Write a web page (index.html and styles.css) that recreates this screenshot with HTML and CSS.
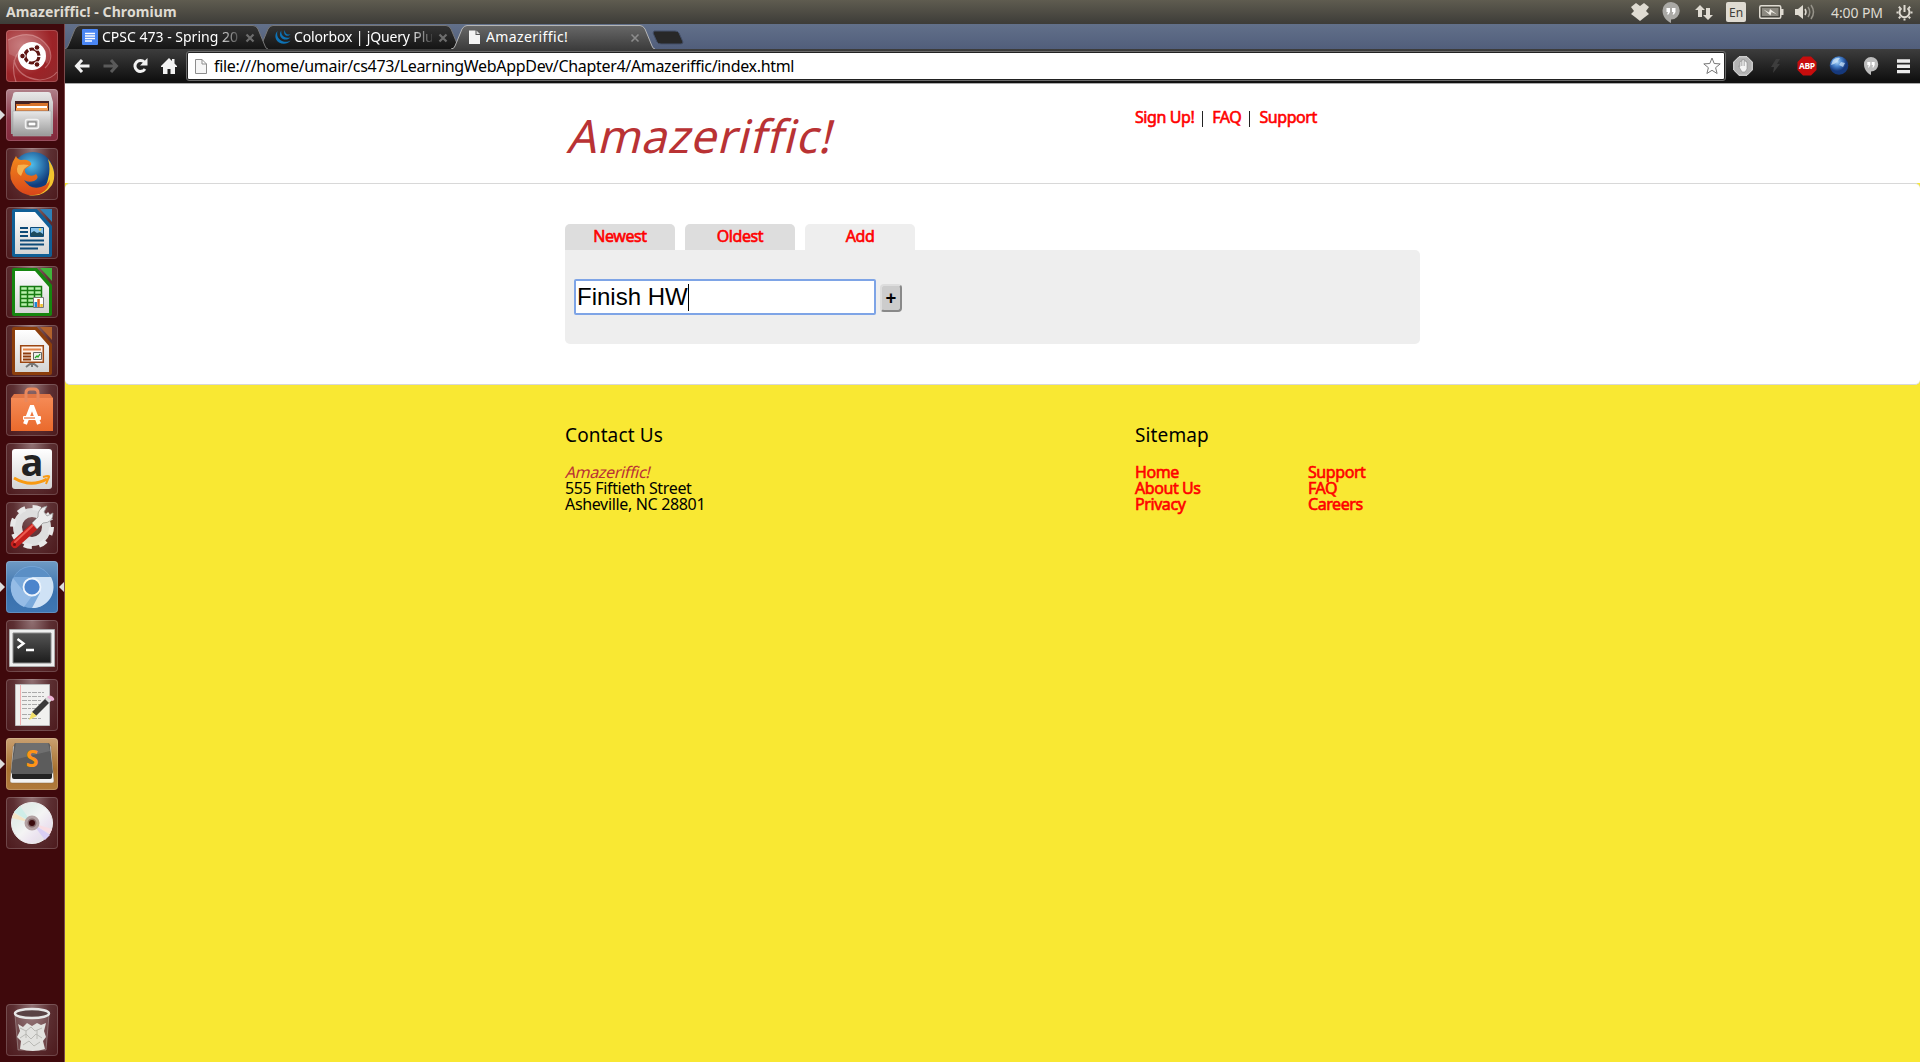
FILE: index.html
```html
<!DOCTYPE html>
<html lang="en">
<head>
<meta charset="utf-8">
<title>Amazeriffic!</title>
<link rel="stylesheet" href="styles.css">
</head>
<body>
<svg width="0" height="0" class="defs">
  <defs>
    <linearGradient id="metal" x2="0" y2="1"><stop stop-color="#e8e8e8"/><stop offset="1" stop-color="#999"/></linearGradient>
    <linearGradient id="paper" x2="0" y2="1"><stop stop-color="#fff"/><stop offset="1" stop-color="#d4d4d4"/></linearGradient>
    <linearGradient id="tabdark" x2="0" y2="1"><stop stop-color="#343434"/><stop offset="1" stop-color="#151515"/></linearGradient>
    <linearGradient id="tablight" x2="0" y2="1"><stop stop-color="#686868"/><stop offset="1" stop-color="#3d3d3d"/></linearGradient>
    <linearGradient id="bag" x2="0" y2="1"><stop stop-color="#f58a55"/><stop offset="1" stop-color="#ea6a2c"/></linearGradient>
    <linearGradient id="screen" x2="0" y2="1"><stop stop-color="#555"/><stop offset="1" stop-color="#1c1c1c"/></linearGradient>
    <radialGradient id="globe" cx=".45" cy=".3"><stop stop-color="#4fc0ee"/><stop offset="1" stop-color="#123c7c"/></radialGradient>
    <radialGradient id="earth" cx=".4" cy=".3"><stop stop-color="#b5dcfa"/><stop offset=".5" stop-color="#4a86d0"/><stop offset="1" stop-color="#16397c"/></radialGradient>
    <linearGradient id="fox" x2="0" y2="1"><stop stop-color="#f28a1c"/><stop offset="1" stop-color="#d9461a"/></linearGradient>
    <linearGradient id="disc" x2="1" y2="1"><stop stop-color="#e8e8e8"/><stop offset=".3" stop-color="#e4eeea"/><stop offset=".5" stop-color="#f4f4f4"/><stop offset=".7" stop-color="#ece4f0"/><stop offset="1" stop-color="#ddd"/></linearGradient>
  </defs>
</svg>

<header class="panel">
  <span class="panel-title">Amazeriffic! - Chromium</span>
  <div class="indicators">
    <svg class="ind-dropbox" width="20" height="18" viewBox="0 0 20 18"><path fill="#dfdbd2" d="M6 0l4 3 4-3 5 4-3 4 3 3-4 3-5 4-5-4-4-3 3-3-3-4z"/></svg>
    <svg class="ind-hangouts" width="18" height="21" viewBox="0 0 18 21"><path fill="#aaa9a5" d="M9 0a8.500 8.500 0 0 1 0 17.500V21C4 18.500.5 14 .5 8.500A8.500 8.500 0 0 1 9 0z"/><path fill="#fff" d="M4.500 6H8v4l-1.500 2.500H5L6 10H4.500zM10 6h3.500v4L12 12.500h-1.500l1-2.500H10z"/></svg>
    <svg class="ind-net" width="18" height="17" viewBox="0 0 18 17"><path fill="#dfdbd2" d="M5 1l5 5H7v7H3V6H0zM13 16l5-5h-3V4h-4v7H8z"/></svg>
    <span class="ind-lang">En</span>
    <svg class="ind-battery" width="25" height="14" viewBox="0 0 25 14"><rect x=".75" y=".75" width="21" height="12.500" rx="1.500" fill="none" stroke="#dfdbd2" stroke-width="1.500"/><path fill="#8c8980" d="M3 3h16.500v8H3z"/><path fill="#dfdbd2" d="M22 4h2.500v6H22z"/><path fill="#f0ede5" d="M4.500 4.500L10 7.500l1-3.500 7 5.500-5.500-2.500-1 3.500z"/></svg>
    <svg class="ind-volume" width="21" height="16" viewBox="0 0 21 16"><path fill="#dfdbd2" d="M0 5h3l5-4v14l-5-4H0z"/><path fill="none" stroke="#dfdbd2" stroke-width="1.500" d="M10 5q2 3 0 6"/><path fill="none" stroke="#96938a" stroke-width="1.500" d="M13 3q3.500 5 0 10M16 1q5 7 0 14"/></svg>
    <span class="ind-clock">4:00 PM</span>
    <svg class="ind-gear" width="17" height="17" viewBox="0 0 17 17"><g fill="none" stroke="#dfdbd2" stroke-width="2"><path d="M5.500 4.200a5 5 0 1 0 6 0M8.500 1v7"/><path d="M.5 8.500h2M14.500 8.500h2M8.500 14.500v2M2.800 2.800l1.500 1.500M14.200 2.800l-1.500 1.500M2.800 14.200l1.500-1.500M14.200 14.200l-1.500-1.500"/></g></svg>
  </div>
</header>

<div class="desktop">
  <nav class="launcher">
    <div class="tile tile-dash"><svg viewBox="0 0 52 52"><g fill="none" stroke="#e3a5a5" stroke-opacity=".5" stroke-width="1.200"><path d="M2 10q26-14 41 8 5 12-4 20M10 52q-8-24 9-36M8 30q4 18 26 20 12-1 17-8"/></g><path fill="#fff" fill-opacity=".14" d="M2 10q26-14 41 8 3 10-2 16L26 13Q14 20 12 28L3 24z"/><circle cx="26" cy="26" r="14" fill="#fff"/><circle cx="26" cy="26" r="7" fill="none" stroke="#5e1512" stroke-width="3.200" stroke-dasharray="13 1.660" stroke-dashoffset="-1"/><g fill="#5e1512" stroke="#fff" stroke-width="1"><circle cx="16.500" cy="26" r="2.800"/><circle cx="31" cy="17.500" r="2.800"/><circle cx="31" cy="34.500" r="2.800"/></g></svg></div>
    <div class="tile tile-files run"><svg viewBox="0 0 52 52"><path fill="url(#metal)" d="M7 6q0-3 3-3h32q3 0 3 3l2 7v32H5V13z"/><path fill="#422" d="M9 12h34v12H9z"/><path fill="#d8742b" d="M10 15h13l2-1h17v9H10z"/><path fill="#fff" d="M11 17h30v2H11z"/><path fill="#f5a254" d="M10 19h32v2H10z"/><path fill="url(#metal)" stroke="#aaa" stroke-width=".6" d="M7 22h38v25H7z"/><rect x="19.500" y="30.500" width="13" height="9" rx="2" fill="#c5c5c5" stroke="#f2f2f2" stroke-width="1.500"/><rect x="22" y="33" width="8" height="4" fill="#fff" stroke="#777"/></svg></div>
    <div class="tile"><svg viewBox="0 0 52 52"><circle cx="27" cy="25" r="21" fill="url(#globe)"/><path fill="#f2c32e" d="M42 11q10 13 4 26-9 13-24 10 18-3 20-16 3-10 0-20z"/><path fill="url(#fox)" d="M10 8q1 3 5 4 5-1 8 1 3 2 2 4l-6 4q-1 4 3 6 5 2 8-1 4 4-2 7-6 2-10-1 6 10 17 7 7-2 9-8 0 10-10 15-15 4-24-6-8-9-5-20 1-6 5-12z"/><path fill="#f7b14d" d="M12 17q6-1 11 0l-5 4-3 7q-6-3-3-11z"/></svg></div>
    <div class="tile"><svg viewBox="0 0 52 52"><path fill="#105f96" d="M6 4q0-2 2-2h23l15 17v29q0 2-2 2H8q-2 0-2-2z"/><path fill="url(#paper)" d="M9 5h20l14 16v26H9z"/><path fill="#2f81b7" d="M34 2h12v13q-6-7-12-13z"/><path stroke="#0d4a78" stroke-width="2" d="M14 21h8M14 25h8M14 29h8M14 33.500h24M14 37.500h24M14 41.500h18"/><path fill="#8ac4ec" stroke="#0d4a78" d="M24.500 20.500h13v9h-13z"/><path fill="#1c4a5c" d="M25 29v-3l3-2 3 2 3-1 3 2v2z"/><circle cx="34" cy="22.500" r="1.200" fill="#f5d547"/></svg></div>
    <div class="tile"><svg viewBox="0 0 52 52"><path fill="#16860f" d="M6 4q0-2 2-2h23l15 17v29q0 2-2 2H8q-2 0-2-2z"/><path fill="url(#paper)" d="M9 5h20l14 16v26H9z"/><path fill="#41b53c" d="M34 2h12v13q-6-7-12-13z"/><path fill="#b7f0ab" stroke="#177a12" stroke-width="1.500" d="M14.500 20.500h21v20h-21zM14.500 24.500h21M14.500 28.500h21M14.500 32.500h21M14.500 36.500h21M21.500 20.500v20M28.500 20.500v20"/><path fill="#fff" stroke="#777" d="M27.500 31.500h10v10h-10z"/><path fill="#1d87d6" d="M28.500 36h2.500v5h-2.500z"/><path fill="#e0631f" d="M31.300 33h2.500v8h-2.500z"/><path fill="#eec02b" d="M34.300 38h2.500v3h-2.500z"/></svg></div>
    <div class="tile"><svg viewBox="0 0 52 52"><path fill="#8c3e0c" d="M6 4q0-2 2-2h23l15 17v29q0 2-2 2H8q-2 0-2-2z"/><path fill="url(#paper)" d="M9 5h20l14 16v26H9z"/><path fill="#b2622c" d="M34 2h12v13q-6-7-12-13z"/><path fill="#fff2e8" stroke="#9c4612" stroke-width="1.500" d="M14.700 20.700h22.600v16.600H14.700z"/><path stroke="#e28449" stroke-width="2" d="M17 24.500h18"/><path stroke="#8e3d0e" stroke-width="2" d="M17 28.500h8M17 31.500h8M17 34.500h8"/><path fill="#eee" stroke="#666" d="M27.500 27.500h8v7h-8z"/><path fill="none" stroke="#25a525" stroke-width="1.300" d="M29 33l2-2 1 1 2-3"/><path fill="none" stroke="#777" stroke-width="2" d="M20 42l4-3h4l4 3M26 38v4"/></svg></div>
    <div class="tile"><svg viewBox="0 0 52 52"><path fill="#e07646" d="M5 14l3-4h36l3 4z"/><path fill="url(#bag)" d="M5 14h42v33H5z"/><path fill="none" stroke="#e8885d" stroke-width="3" d="M20 18V9q0-4 4-4h4q4 0 4 4v9"/><path fill="none" stroke="#fff" stroke-width="4" d="M19 40l6.500-17h1L33 40"/><rect x="17" y="32" width="18" height="4" rx="1" fill="#fff"/><path stroke="#ed733a" stroke-width="1.200" d="M18 34h11"/></svg></div>
    <div class="tile"><svg viewBox="0 0 52 52"><rect x="6" y="6" width="40" height="40" rx="3" fill="url(#paper)"/><text x="26" y="33" text-anchor="middle" class="amazon-a">a</text><path fill="none" stroke="#f89a12" stroke-width="3" d="M8 35q17 10 33 1"/><path fill="none" stroke="#f89a12" stroke-width="2" d="M37 34q7-2 6 0t-3 7"/></svg></div>
    <div class="tile"><svg viewBox="0 0 52 52"><circle cx="26" cy="25" r="14.500" fill="none" stroke="#dedede" stroke-width="9"/><circle cx="26" cy="25" r="19.500" fill="none" stroke="#e8e8e8" stroke-width="5" stroke-dasharray="8 7.310"/><path stroke="#c5201d" stroke-width="8" stroke-linecap="round" d="M9 42l20-18"/><path stroke="#ec5b50" stroke-width="2" stroke-linecap="round" d="M9 40l18-17"/><circle cx="8.500" cy="42.500" r="1.500" fill="#6b0d0d"/><path fill="#ececec" stroke="#999" stroke-width=".8" d="M26 21l6-6q-1-9 9-11l-3 6 3 4 6-3q0 10-10 10l-6 6z"/></svg></div>
    <div class="tile tile-chromium run active"><svg viewBox="0 0 52 52"><circle cx="26" cy="26" r="21" fill="#79a9db"/><path fill="#5b8fc5" d="M8 16a21 21 0 0 1 36 0z"/><path fill="#cfe2f5" d="M26 16h19a21 21 0 0 1-19 31l8-15z"/><path fill="#95bce6" d="M7 17l11 14 8 4-8 11A21 21 0 0 1 7 17z"/><circle cx="26" cy="26" r="8.500" fill="#4c85cc" stroke="#eef5fc" stroke-width="1.800"/></svg></div>
    <div class="tile"><svg viewBox="0 0 52 52"><path fill="#efefef" stroke="#aaa" d="M3.500 9.500h45v37h-45z"/><path fill="url(#screen)" stroke="#888" d="M7 13h38v30H7z"/><path fill="none" stroke="#fff" stroke-width="2.400" d="M11.500 19l6 4.500-6 4.500M20 30h8"/></svg></div>
    <div class="tile"><svg viewBox="0 0 52 52"><path fill="#f0f0ee" stroke="#bcbcbc" d="M9.500 5.500h34v41h-34z"/><path stroke="#f0b0b0" d="M14.500 6v40"/><path stroke="#aaa" stroke-dasharray="5 1 3 1" d="M16 13.500h22M16 17.500h22M16 21.500h20M16 25.500h18M16 29.500h20M16 35.500h12M16 39.500h20"/><path fill="#3a3a3a" d="M26 33l14-14 4 4-14 14z"/><path fill="#ddd" d="M39 20l3-3 4 4-3 3z"/><path fill="#eeb3d6" d="M41 18q3-3 6 0t-1 4z"/><path fill="#f1de65" d="M26 33l5 4-8 4z"/></svg></div>
    <div class="tile tile-sublime run"><svg viewBox="0 0 52 52"><path fill="#f2f2f2" stroke="#8b6a42" stroke-width=".5" d="M7 8h38l3 35q0 2-2 2H6q-2 0-2-2z"/><path fill="#232323" d="M6 34h40v5q0 2-2 2H8q-2 0-2-2z"/><path fill="#5c5c5c" d="M10 5h32q2 0 2 2l3 27q0 2-2 2H7q-2 0-2-2L8 7q0-2 2-2z"/><path fill="#fff" fill-opacity=".12" d="M10 5h32l2 8L7 22z"/><text x="26" y="28.500" text-anchor="middle" class="sublime-s">S</text></svg></div>
    <div class="tile"><svg viewBox="0 0 52 52"><circle cx="26" cy="26" r="20.500" fill="url(#disc)" stroke="#eee"/><path fill="#cfeee8" d="M26 26L8 15l6-6z"/><path fill="#f5e5c5" d="M26 26L6 21l2-5z"/><path fill="#d9cff5" d="M26 26l18 12-5 5z"/><path fill="#f8dde3" d="M26 26l20 6-2 5z"/><circle cx="26" cy="26" r="6" fill="#84696b" stroke="#b3a1a2" stroke-width="3"/><circle cx="26" cy="26" r="3" fill="#3a0a0c"/></svg></div>
    <div class="tile tile-trash"><svg viewBox="0 0 52 52"><path fill="#fff" fill-opacity=".15" stroke="#a99" stroke-width=".6" d="M9 11h34l-3 35H12z"/><path fill="#e2e2df" d="M12 20l5 3 4-4 5 3 5-3 4 2 5-2-2 8 2 6-3 4 2 8q-12 4-25 0l1-8-4-4 3-6z"/><path fill="none" stroke="#b4b4b0" stroke-width=".9" d="M14 24l6 3 5-4 4 4 7-3M14 34l6-4 5 5 5-5 6 4M17 41l6-4 5 5 6-4M20 27v7M31 26v9"/><ellipse cx="26" cy="9.500" rx="17" ry="4.500" fill="#594244" stroke="#e6e6e6" stroke-width="2.500"/></svg></div>
  </nav>

  <div class="browser">
    <div class="tabstrip">
      <div class="tab tab-1">
        <svg class="tab-shape" width="206" height="25" viewBox="0 0 206 25"><path fill="url(#tabdark)" stroke="#777" d="M1 25q3 0 4-3l7-17q2-3.500 5-3.500h173q3 0 5 3.500l7 17q1 3 3 3"/></svg>
        <svg class="favicon" width="16" height="16" viewBox="0 0 16 16"><rect width="16" height="16" rx="1" fill="#4a86f4"/><path stroke="#fff" stroke-width="1.300" d="M3 4.500h10M3 7h10M3 9.500h10M3 12h7"/></svg>
        <span class="tab-label">CPSC 473 - Spring 20</span>
        <svg class="tab-close" width="10" height="10" viewBox="0 0 10 10"><path stroke="#6d6d6d" stroke-width="2.200" d="M1.500 1.500l7 7M8.500 1.500l-7 7"/></svg>
      </div>
      <div class="tab tab-2">
        <svg class="tab-shape" width="206" height="25" viewBox="0 0 206 25"><path fill="url(#tabdark)" stroke="#777" d="M1 25q3 0 4-3l7-17q2-3.500 5-3.500h173q3 0 5 3.500l7 17q1 3 3 3"/></svg>
        <svg class="favicon" width="16" height="16" viewBox="0 0 16 16"><g fill="#0e72b5"><path d="M2.500 2C-1 6 0 11 4 13.500c4 2.300 9 1.500 11.500-2C13 13 9 13.300 6 11.500 2.500 9.300 1.500 6 2.500 2z"/><path d="M6.300 1.500c-2.300 3-1.500 6.500 1.200 8.200 2.700 1.500 6 1 8-1.500-2 .9-4.500.8-6.500-.5C6.700 6.200 5.900 4 6.300 1.500z"/><path d="M10 1c-1.500 1.800-1 4 .5 5.200 1.700 1 3.700.7 5-.9-1.300.5-2.700.4-3.800-.4C10.300 4 9.800 2.600 10 1z"/></g></svg>
        <span class="tab-label">Colorbox | jQuery Plu</span>
        <svg class="tab-close" width="10" height="10" viewBox="0 0 10 10"><path stroke="#6d6d6d" stroke-width="2.200" d="M1.500 1.500l7 7M8.500 1.500l-7 7"/></svg>
      </div>
      <div class="tab tab-3">
        <svg class="tab-shape" width="206" height="25" viewBox="0 0 206 25"><path fill="url(#tablight)" stroke="#b5b5b5" d="M1 25q3 0 4-3l7-17q2-3.500 5-3.500h173q3 0 5 3.500l7 17q1 3 3 3"/></svg>
        <svg class="favicon" width="16" height="16" viewBox="0 0 16 16"><path fill="#f4f4f4" d="M0 1.500h6.500V6H11v9H0z"/><path fill="#ddd" d="M7.500 1.500L11 5H7.500z"/></svg>
        <span class="tab-label">Amazeriffic!</span>
        <svg class="tab-close" width="10" height="10" viewBox="0 0 10 10"><path stroke="#8c8c8c" stroke-width="1.600" d="M1.500 1.500l7 7M8.500 1.500l-7 7"/></svg>
      </div>
      <svg class="newtab" width="32" height="16" viewBox="0 0 32 16"><path fill="#282828" stroke="#44506a" d="M2 1h21q3 0 4 2l4 9q0 2-2 2H9q-3 0-4-2L1 3z"/></svg>
    </div>

    <div class="toolbar">
      <svg class="nav-icon" width="16" height="14" viewBox="0 0 16 14"><path fill="none" stroke="#f2f2f2" stroke-width="3" d="M8 1L2.500 7 8 13M3 7h12.500"/></svg>
      <svg class="nav-icon" width="16" height="14" viewBox="0 0 16 14"><path fill="none" stroke="#5a5a5a" stroke-width="3" d="M8 1l5.500 6L8 13M13 7H.5"/></svg>
      <svg class="nav-icon" width="16" height="16" viewBox="0 0 16 16"><path fill="none" stroke="#f2f2f2" stroke-width="3" d="M12.500 4.200A5.500 5.500 0 1 0 13 11"/><path fill="#f2f2f2" d="M15.500 0v7.500H8z"/></svg>
      <svg class="nav-icon" width="16" height="16" viewBox="0 0 16 16"><path fill="#f2f2f2" d="M8 0l3 3V1h2.500v4.500L16 8v1h-2v7H9.500v-5h-3v5H2V9H0V8z"/></svg>
      <div class="omnibox">
        <svg width="12" height="15" viewBox="0 0 12 15"><path fill="#f6f6f6" stroke="#8d8d8d" d="M.5.500h6.500l4.500 4.500v9.500H.5zM7 .5V5h4.500"/></svg>
        <span class="url">file:///home/umair/cs473/LearningWebAppDev/Chapter4/Amazeriffic/index.html</span>
        <svg class="star" width="18" height="18" viewBox="0 0 18 18"><path fill="#fff" stroke="#777" d="M9 1l2.200 5.500 6 .4-4.600 3.800 1.500 5.800L9 13.300l-5.100 3.200 1.500-5.800L.8 6.900l6-.4z"/></svg>
      </div>
      <div class="extensions">
        <svg viewBox="0 0 20 20"><path fill="#b4b4b4" stroke="#e8e8e8" d="M6 .7h8L19.300 6v8L14 19.300H6L.7 14V6z"/><path fill="#f4f4f4" stroke="#8a8a8a" stroke-width=".6" d="M5.500 10l1.500.5V5.500h1.500V4H10v-.5h1.500V5H13v1h1v7l-2 3H9z"/><path stroke="#999" stroke-width=".6" d="M8.500 5.500V10M10 4v6M11.500 5v5"/></svg>
        <svg viewBox="0 0 20 20"><path fill="#3d3d3d" d="M11 3h4l-3 5h3L8 17l1-6H6z"/></svg>
        <svg viewBox="0 0 20 20"><path fill="#c70d0d" d="M6 .5h8L19.500 6v8L14 19.500H6L.5 14V6z"/><text x="10" y="13.200" text-anchor="middle" textLength="16" class="abp">ABP</text></svg>
        <svg viewBox="0 0 20 20"><circle cx="10" cy="9.500" r="9.300" fill="url(#earth)"/><path fill="#d5eafa" fill-opacity=".7" d="M4 4q4-3 7-2L8 6 5 8l-3 1zM12 6l4 1-2 4-4-2z"/></svg>
        <svg viewBox="0 0 20 20"><path fill="#bdbdbd" d="M10 1a7 7 0 0 1 0 14.500V19C6 17 3 13 3 8.500A7 7 0 0 1 10 1z"/><path fill="#fff" d="M6.300 6h3v3L8 11.500H7L7.700 9H6.300zM10.700 6h3v3l-1.300 2.500h-1l.6-2.500h-1.300z"/></svg>
        <svg viewBox="0 0 20 20"><path stroke="#ececec" stroke-width="3.400" d="M4 5h13M4 10.300h13M4 15.600h13"/></svg>
      </div>
    </div>

    <div class="page">
      <header class="site-header">
        <div class="container">
          <h1 class="logo"><span>Amazeriffic!</span></h1>
          <p class="top-links"><a>Sign Up!</a><i></i><a>FAQ</a><i></i><a>Support</a></p>
        </div>
      </header>
      <main class="site-main">
        <div class="container-main">
          <div class="site-tabs">
            <a class="site-tab">Newest</a>
            <a class="site-tab">Oldest</a>
            <a class="site-tab current">Add</a>
          </div>
          <div class="content">
            <div class="todo-input"><span>Finish HW</span><span class="caret"></span></div>
            <button class="add-button">+</button>
          </div>
        </div>
      </main>
      <footer class="site-footer">
        <section class="contact">
          <h2>Contact Us</h2>
          <p><em>Amazeriffic!</em></p>
          <p>555 Fiftieth Street</p>
          <p>Asheville, NC 28801</p>
        </section>
        <section class="sitemap">
          <h2>Sitemap</h2>
          <div class="links">
            <ul><li><a>Home</a></li><li><a>About Us</a></li><li><a>Privacy</a></li></ul>
            <ul><li><a>Support</a></li><li><a>FAQ</a></li><li><a>Careers</a></li></ul>
          </div>
        </section>
      </footer>
    </div>
  </div>
</div>
</body>
</html>
```
FILE: styles.css
```css
* { box-sizing: border-box; }
body {
  margin: 0;
  width: 1920px;
  height: 1062px;
  overflow: hidden;
  display: flex;
  flex-direction: column;
  font-family: "Noto Sans", "Open Sans", sans-serif;
}
h1, h2, p, ul { margin: 0; padding: 0; font-weight: 400; list-style: none; }
svg { display: block; flex: none; }
.defs { position: absolute; }

/* desktop panel */
.panel {
  height: 24px;
  flex: none;
  display: flex;
  align-items: center;
  padding: 0 7px 0 6px;
  background: linear-gradient(#5f5c50, #3d3c38);
  color: #dfdbd2;
}
.panel-title { font-size: 14px; font-weight: 700; line-height: 24px; letter-spacing: .08px; white-space: nowrap; }
.indicators { margin-left: auto; display: flex; align-items: center; height: 24px; }
.ind-hangouts { margin-left: 12px; }
.ind-net { margin-left: 15px; }
.ind-lang {
  margin-left: 13px;
  width: 20px;
  height: 20px;
  border-radius: 2px;
  background: #dfdbd2;
  color: #3f3e39;
  font-size: 12px;
  line-height: 21px;
  text-align: center;
}
.ind-battery { margin-left: 13px; }
.ind-volume { margin-left: 11px; }
.ind-clock { margin-left: 15px; width: 52px; font-size: 14px; letter-spacing: -.1px; white-space: nowrap; }
.ind-gear { margin-left: 13px; }

/* launcher */
.desktop { flex: 1; display: flex; min-height: 0; }
.launcher {
  width: 65px;
  flex: none;
  padding: 6px 0 6px 6px;
  display: flex;
  flex-direction: column;
  gap: 7px;
  background: #3f090c;
  border-right: 1px solid #7c4a4c;
}
.tile {
  position: relative;
  width: 52px;
  height: 52px;
  flex: none;
  border-radius: 4px;
  background: radial-gradient(ellipse at 50% 0, #917173 0, #5c2f32 50%, #4c191c 100%);
  box-shadow: inset 0 0 0 1px rgba(255, 255, 255, .18);
}
.tile svg { width: 52px; height: 52px; }
.tile-dash { background: radial-gradient(circle at 30% 30%, #c06a6c, #9c2327 60%, #8d2a2d); }
.tile-files { background: linear-gradient(#b0818a, #8b3345 60%, #83293c); }
.tile-chromium { background: linear-gradient(#6f9ac4, #3a71ad 60%, #3f77b3); }
.tile-sublime { background: linear-gradient(#c9a071, #a9712f 60%, #b07a3c); }
.tile-trash { margin-top: auto; }
.run::before, .active::after {
  content: "";
  position: absolute;
  top: 21px;
  border: 5px solid transparent;
}
.run::before { left: -6px; border-left-color: #ddd; border-right: 0; }
.active::after { right: -6px; border-right-color: #ddd; border-left: 0; }
.amazon-a { font: 700 38px "Open Sans", sans-serif; fill: #222; }
.sublime-s { font: 700 23px "Open Sans", sans-serif; fill: #ff9416; }

/* browser chrome */
.browser { flex: 1; display: flex; flex-direction: column; min-width: 0; }
.tabstrip {
  height: 25px;
  flex: none;
  display: flex;
  overflow: hidden;
  background: linear-gradient(#62708a, #515e7b);
}
.tab {
  position: relative;
  width: 206px;
  margin-right: -13px;
  flex: none;
  display: flex;
  align-items: center;
  padding-left: 19px;
  color: #fff;
  font-size: 14px;
}
.tab-1 { margin-left: -2px; z-index: 2; }
.tab-2 { z-index: 1; margin-right: -12px; }
.tab-3 { z-index: 3; margin-right: -4px; }
.tab-shape { position: absolute; left: 0; top: 0; }
.favicon, .tab-label, .tab-close { position: relative; }
.tab-label { margin-left: 4px; width: 138px; line-height: 25px; overflow: hidden; white-space: nowrap; }
.tab-1 .tab-label, .tab-2 .tab-label { -webkit-mask-image: linear-gradient(90deg, #000 115px, transparent 142px); }
.tab-2 .tab-label { margin-left: 3px; letter-spacing: -.15px; }
.tab-3 .tab-label { margin-left: 1px; letter-spacing: .4px; }
.tab-close { margin-left: 6px; top: 1px; }
.tab-1 .tab-close { margin-left: 5px; }
.newtab { margin-top: 6px; }

.toolbar {
  height: 35px;
  flex: none;
  display: flex;
  align-items: center;
  padding: 0 6px 0 9px;
  background: linear-gradient(#3d3d3d, #111 90%);
  border-bottom: 1px solid #aaa;
}
.nav-icon { width: 16px; margin-right: 13px; }
.omnibox {
  width: 1538px;
  height: 28px;
  margin-left: -3px;
  display: flex;
  align-items: center;
  padding: 0 3px 0 7px;
  background: #fff;
  border: 1px solid #222;
  outline: 1px solid #6b6b6b;
  outline-offset: 0;
  border-radius: 2px;
}
.url { margin-left: 7px; font-size: 16px; line-height: 24px; letter-spacing: -.32px; white-space: nowrap; color: #000; }
.star { margin-left: auto; }
.extensions { display: flex; gap: 12px; margin-left: 8px; }
.extensions svg { width: 20px; height: 20px; }
.abp { font: 700 8.5px "Open Sans", sans-serif; fill: #fff; }

/* page */
.page { flex: 1; min-height: 0; background: #f9e833; overflow: hidden; color: #000; }
.site-header { height: 99px; background: #fff; }
.container { width: 855px; margin: 0 auto; display: flex; justify-content: space-between; }
.logo { padding: 21px 0 0 2px; color: #b93234; font-size: 46px; line-height: 60px; letter-spacing: .85px; }
.logo span { display: inline-block; transform: skewX(-14deg); transform-origin: 0 75%; }
.top-links { width: 285px; height: 16px; margin-top: 25px; font-size: 16px; line-height: 16px; display: flex; }
.top-links i { width: 1px; height: 16px; margin: 2px 9px 0 8px; background: #222; }
.page a { color: #f00; letter-spacing: -.42px; -webkit-text-stroke: .6px #f00; }
.site-main {
  height: 202px;
  background: #fff;
  border-top: 1px solid #d8d8d8;
  border-bottom: 1px solid #d8d8d8;
  border-radius: 5px;
  padding-top: 40px;
}
.container-main { width: 855px; margin: 0 auto; }
.site-tabs { display: flex; gap: 10px; }
.site-tab {
  width: 110px;
  height: 26px;
  border-radius: 5px 5px 0 0;
  background: #ddd;
  text-align: center;
  font-size: 16px;
  line-height: 24px;
}
.site-tab.current { background: #eee; }
.content {
  height: 94px;
  padding: 0 9px;
  display: flex;
  align-items: center;
  background: #eee;
  border-radius: 0 5px 5px 5px;
}
.todo-input {
  width: 302px;
  height: 36px;
  padding-left: 1px;
  display: flex;
  align-items: center;
  background: #fff;
  border: 2px solid #7ea4e6;
  border-radius: 2px;
  font: 24px/30px "Liberation Sans", sans-serif;
}
.caret { width: 1px; height: 27px; background: #000; }
.add-button {
  width: 22px;
  height: 28px;
  margin: 2px 0 0 4px;
  padding: 0;
  border: 2px outset #ddd;
  border-radius: 4px;
  background: #ccc;
  font: 700 19px/20px "Noto Sans", sans-serif;
  color: #000;
}
.site-footer { width: 855px; margin: 0 auto; padding-top: 36px; display: flex; justify-content: space-between; }
.site-footer h2 { font-size: 19px; line-height: 28px; letter-spacing: .13px; margin-bottom: 15px; }
.site-footer p, .site-footer li { font-size: 16px; line-height: 16px; height: 16px; white-space: nowrap; }
.contact p { letter-spacing: -.34px; }
.contact em { display: inline-block; font-style: normal; color: #b93234; transform: skewX(-14deg); transform-origin: 0 80%; }
.sitemap { width: 285px; }
.links { display: grid; grid-template-columns: 173px 1fr; }
```
